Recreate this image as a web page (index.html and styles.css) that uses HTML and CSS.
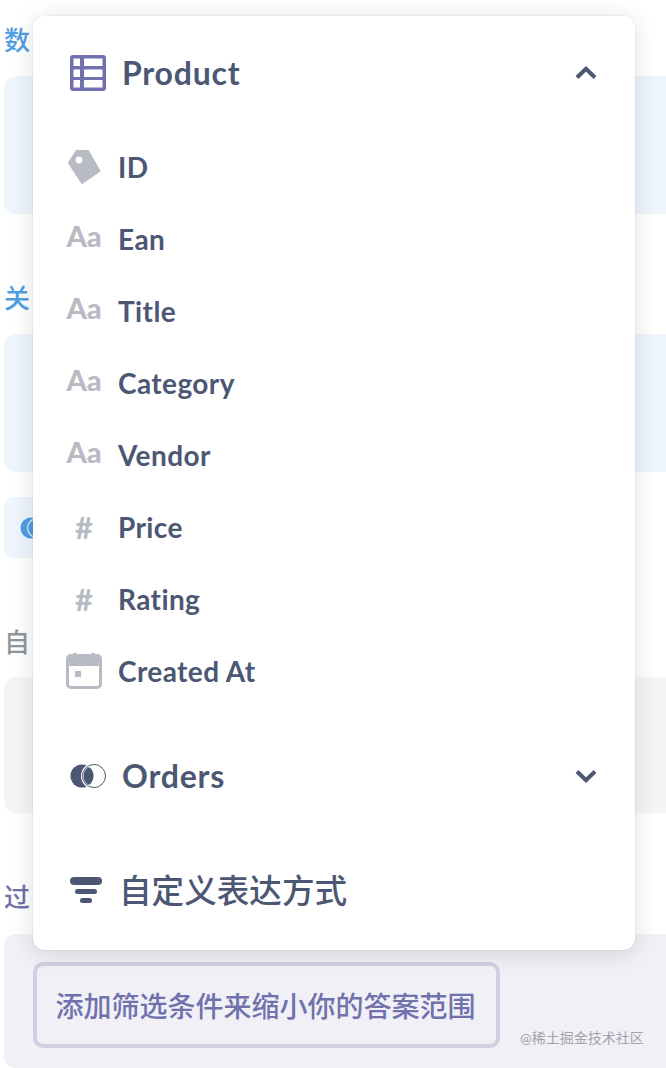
FILE: index.html
```html
<!DOCTYPE html>
<html lang="zh-CN">
<head>
    <meta charset="UTF-8">
    <meta name="viewport" content="width=device-width, initial-scale=1.0">
    <link rel="stylesheet" href="styles.css">
    <title>Notebook</title>
</head>
<body>
    <div class="page">
        <div class="label label-blue">数</div>
        <div class="box box-blue"></div>

        <div class="label label-blue label-join">关</div>
        <div class="box box-blue"></div>
        <div class="chip">
            <svg width="28" height="22" viewBox="0 0 28 22">
                <circle cx="11" cy="11" r="10.5" fill="#509ee3"/>
                <circle cx="17" cy="11" r="9.5" fill="none" stroke="#cfe3f7" stroke-width="1.5"/>
            </svg>
        </div>

        <div class="label label-gray">自</div>
        <div class="box box-gray"></div>

        <div class="label label-purple">过</div>
        <div class="box box-filter">
            <button class="filter-btn">添加筛选条件来缩小你的答案范围</button>
        </div>
    </div>

    <div class="menu">
        <div class="menu-head">
            <svg class="head-icon" width="36" height="36" viewBox="0 0 36 36">
                <rect width="36" height="36" rx="3" fill="#7172ad"/>
                <g fill="#fff">
                    <rect x="3.5" y="3.5" width="6.5" height="7.5"/>
                    <rect x="14" y="3.5" width="18.5" height="7.5"/>
                    <rect x="3.5" y="14.5" width="6.5" height="7.5"/>
                    <rect x="14" y="14.5" width="18.5" height="7.5"/>
                    <rect x="3.5" y="25" width="6.5" height="7.5"/>
                    <rect x="14" y="25" width="18.5" height="7.5"/>
                </g>
            </svg>
            <span class="head-title">Product</span>
            <svg class="chevron" width="22" height="14" viewBox="0 0 22 14">
                <path d="M2 11.5 L11 2.8 L20 11.5" fill="none" stroke="#4c5773" stroke-width="4"/>
            </svg>
        </div>

        <ul class="fields">
            <li class="field">
                <span class="field-icon">
                    <svg width="36" height="36" viewBox="0 0 36 36">
                        <path d="M10.5 2 L22 2 L33.5 22 L16 34 L3 14 Z" fill="#b8bbc3" stroke="#b8bbc3" stroke-width="2" stroke-linejoin="round"/>
                        <circle cx="13" cy="11" r="3.4" fill="#fff"/>
                    </svg>
                </span>
                ID
            </li>
            <li class="field"><span class="field-icon glyph-aa">Aa</span>Ean</li>
            <li class="field"><span class="field-icon glyph-aa">Aa</span>Title</li>
            <li class="field"><span class="field-icon glyph-aa">Aa</span>Category</li>
            <li class="field"><span class="field-icon glyph-aa">Aa</span>Vendor</li>
            <li class="field"><span class="field-icon">#</span>Price</li>
            <li class="field"><span class="field-icon">#</span>Rating</li>
            <li class="field">
                <span class="field-icon">
                    <svg width="36" height="36" viewBox="0 0 36 36">
                        <rect x="1.5" y="2.5" width="33" height="32" rx="3.5" fill="#fff" stroke="#b8bbc3" stroke-width="3"/>
                        <path d="M1.5 13 V6 a3.5 3.5 0 0 1 3.5 -3.5 H31 a3.5 3.5 0 0 1 3.5 3.5 V13 Z" fill="#b8bbc3"/>
                        <rect x="7" y="0" width="4" height="4" rx="1" fill="#b8bbc3"/>
                        <rect x="25" y="0" width="4" height="4" rx="1" fill="#b8bbc3"/>
                        <rect x="9" y="18" width="6" height="6" fill="#b8bbc3"/>
                    </svg>
                </span>
                Created At
            </li>
        </ul>

        <div class="menu-head menu-head-orders">
            <svg class="head-icon" width="36" height="24" viewBox="0 0 36 24">
                <circle cx="12" cy="12" r="11.5" fill="#4c5773"/>
                <circle cx="24" cy="12" r="11.5" fill="none" stroke="#fff" stroke-width="3"/>
                <circle cx="24" cy="12" r="11.5" fill="none" stroke="#4c5773" stroke-width="1"/>
                <path d="M18 3.2 a11 11 0 0 1 0 17.6 a11 11 0 0 1 0 -17.6 Z" fill="#4c5773"/>
            </svg>
            <span class="head-title">Orders</span>
            <svg class="chevron" width="22" height="14" viewBox="0 0 22 14">
                <path d="M2 2.5 L11 11.2 L20 2.5" fill="none" stroke="#4c5773" stroke-width="4"/>
            </svg>
        </div>

        <div class="menu-head menu-head-custom">
            <svg class="head-icon" width="32" height="26" viewBox="0 0 32 26">
                <rect x="0" y="0" width="32" height="8" rx="4" fill="#4c5773"/>
                <rect x="5" y="12" width="22" height="5" rx="2.5" fill="#4c5773"/>
                <rect x="10" y="21" width="12" height="5" rx="2.5" fill="#4c5773"/>
            </svg>
            <span class="head-title">自定义表达方式</span>
        </div>
    </div>

    <div class="watermark">@稀土掘金技术社区</div>
</body>
</html>
```

FILE: styles.css
```css
body {
    margin: 0;
    background-color: #fff;
    font-family: Lato, "Noto Sans CJK SC", sans-serif;
    width: 666px;
    height: 1068px;
    overflow: hidden;
    position: relative;
}

.page {
    padding: 26px 0 0 4px;
}

.label {
    height: 28px;
    line-height: 28px;
    font-size: 26px;
    font-weight: 500;
    margin-bottom: 22px;
}

.label-blue {
    color: #509ee3;
}

.label-gray {
    color: #8f979c;
    margin-top: 70px;
    margin-bottom: 21px;
}

.label-purple {
    color: #7172ad;
    margin-top: 70px;
    margin-bottom: 23px;
}

.label-join {
    margin-top: 70px;
}

.box {
    height: 138px;
    border-radius: 12px 0 0 12px;
}

.box-blue {
    background-color: #eef5fd;
}

.box-gray {
    height: 136px;
    background-color: #f3f5f6;
}

.box-filter {
    height: 134px;
    background-color: #f0f0f6;
    box-sizing: border-box;
    padding: 28px 0 0 29px;
}

.chip {
    width: 200px;
    height: 61px;
    margin-top: 25px;
    background-color: #eef5fd;
    border-radius: 10px;
    display: flex;
    align-items: center;
    padding-left: 16px;
    box-sizing: border-box;
}

.filter-btn {
    height: 86px;
    width: 467px;
    padding: 0 2px 0 0;
    box-sizing: border-box;
    border: 4px solid #d0d0e3;
    border-radius: 10px;
    background-color: #f0f0f6;
    color: #7172ad;
    font-family: inherit;
    font-size: 28px;
    font-weight: 500;
}

.menu {
    position: absolute;
    left: 33px;
    top: 16px;
    width: 602px;
    height: 934px;
    box-sizing: border-box;
    padding-top: 21px;
    background-color: #fff;
    border-radius: 12px;
    box-shadow: 0 0 0 1px rgba(0, 0, 0, 0.03), 0 3px 24px rgba(0, 0, 0, 0.13);
}

.menu-head {
    display: flex;
    align-items: center;
    height: 72px;
    padding: 0 38px 0 37px;
    color: #4c5773;
}

.head-icon {
    flex-shrink: 0;
    margin-right: 16px;
}

.head-title {
    flex: 1;
    padding-bottom: 2px;
    font-size: 32px;
    font-weight: 700;
    letter-spacing: 0.8px;
}

.menu-head-orders {
    margin-top: 33px;
}

.menu-head-custom {
    margin-top: 42px;
}

.menu-head-custom .head-icon {
    margin-right: 17px;
}

.menu-head-custom .head-title {
    padding-bottom: 4px;
    font-size: 32.6px;
    font-weight: 500;
    letter-spacing: 0;
}

.fields {
    list-style: none;
    margin: 22px 0 0;
    padding: 0 0 0 33px;
}

.field {
    display: flex;
    align-items: center;
    height: 72px;
    box-sizing: border-box;
    padding-bottom: 1px;
    font-size: 28px;
    font-weight: 700;
    letter-spacing: 0.4px;
    color: #4c5773;
}

.field-icon {
    display: flex;
    align-items: center;
    justify-content: center;
    box-sizing: border-box;
    width: 36px;
    height: 36px;
    margin-right: 16px;
    font-size: 31px;
    letter-spacing: 0;
    color: #b8bbc3;
}

.glyph-aa {
    padding-bottom: 6px;
    font-size: 29px;
    font-weight: 900;
}

.watermark {
    position: absolute;
    left: 520px;
    top: 1029px;
    font-size: 14px;
    line-height: 18px;
    color: #a3a3ad;
}
```
